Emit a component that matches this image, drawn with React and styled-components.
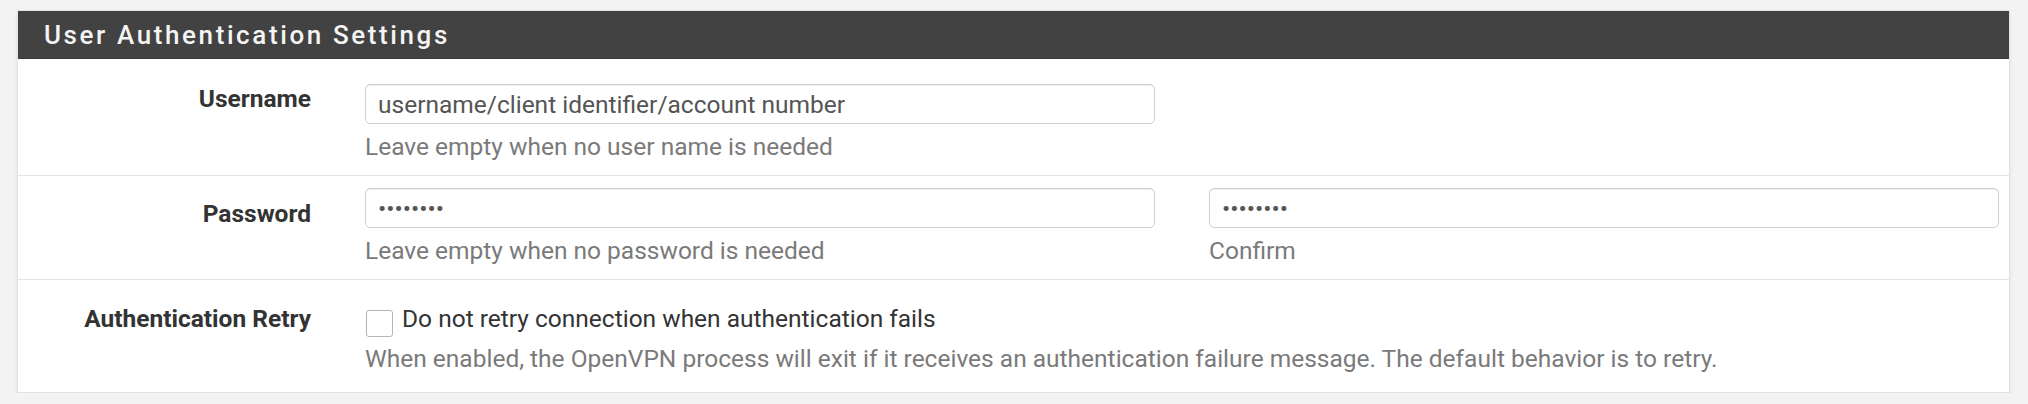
import React from 'react';
import styled, { createGlobalStyle } from 'styled-components';

const GlobalStyle = createGlobalStyle`
  html, body {
    margin: 0;
    padding: 0;
    background: #f3f3f3;
  }
  body {
    font-family: Roboto, "Liberation Sans", Arial, sans-serif;
    font-size: 24.5px;
    line-height: 28px;
    color: #333;
  }
`;

const Page = styled.div`
  padding: 10px 0 0 17px;
`;

const Panel = styled.section`
  width: 1993px;
  box-sizing: border-box;
  background: #fff;
  border: 1px solid #e2e2e2;
  box-shadow: 0 2px 4px rgba(0, 0, 0, 0.08);
`;

const Heading = styled.header`
  display: flex;
  align-items: center;
  height: 47px;
  padding: 0 26px;
  background: #424242;
  border-bottom: 1px solid #3a3a3a;
`;

const Title = styled.h2`
  margin: 0;
  font-size: 26px;
  font-weight: 500;
  letter-spacing: 2.6px;
  color: #f4f4f4;
`;

const Row = styled.div`
  display: grid;
  grid-template-columns: 293px 1fr;
  column-gap: 54px;
  padding: ${(p) => p.$top}px 10px ${(p) => p.$bottom}px 0;
  border-bottom: ${(p) => (p.$last ? 'none' : '1px solid #e4e4e4')};
`;

const Label = styled.label`
  padding-top: ${(p) => p.$offset || 0}px;
  text-align: right;
  font-weight: 700;
  color: #333;
`;

const Fields = styled.div`
  display: grid;
  grid-template-columns: repeat(2, 1fr);
  column-gap: 54px;
`;

const Field = styled.div`
  display: flex;
  flex-direction: column;
`;

const Input = styled.input`
  box-sizing: border-box;
  width: 100%;
  height: 40px;
  padding: 0 12px;
  border: 1px solid #cfcfcf;
  border-radius: 5px;
  box-shadow: inset 0 1px 1px rgba(0, 0, 0, 0.06);
  font-family: Roboto, "Liberation Sans", Arial, sans-serif;
  font-size: 24.5px;
  color: #555;
  background: #fff;
  outline: none;
`;

const Help = styled.span`
  display: block;
  margin-top: ${(p) => p.$gap}px;
  color: #7a7a7a;
`;

const Check = styled.label`
  display: flex;
  align-items: flex-start;
  gap: 9px;
  height: 28px;
  color: #333;
`;

const Box = styled.input`
  flex: none;
  appearance: none;
  box-sizing: border-box;
  width: 27px;
  height: 27px;
  margin: 5px 0 0 1px;
  border: 1px solid #b5b5b5;
  border-radius: 3px;
  background: #fff;
`;

const App = () => (
  <Page>
    <GlobalStyle />
    <Panel>
      <Heading>
        <Title>User Authentication Settings</Title>
      </Heading>

      <Row $top={25} $bottom={14}>
        <Label $offset={1}>Username</Label>
        <Fields>
          <Field>
            <Input type="text" defaultValue="username/client identifier/account number" />
            <Help $gap={9}>Leave empty when no user name is needed</Help>
          </Field>
        </Fields>
      </Row>

      <Row $top={12} $bottom={14}>
        <Label $offset={12}>Password</Label>
        <Fields>
          <Field>
            <Input type="password" defaultValue="12345678" />
            <Help $gap={9}>Leave empty when no password is needed</Help>
          </Field>
          <Field>
            <Input type="password" defaultValue="12345678" />
            <Help $gap={9}>Confirm</Help>
          </Field>
        </Fields>
      </Row>

      <Row $top={25} $bottom={19} $last>
        <Label>Authentication Retry</Label>
        <Field>
          <Check>
            <Box type="checkbox" />
            Do not retry connection when authentication fails
          </Check>
          <Help $gap={12}>
            When enabled, the OpenVPN process will exit if it receives an authentication failure message. The default behavior is to retry.
          </Help>
        </Field>
      </Row>
    </Panel>
  </Page>
);

export default App;
